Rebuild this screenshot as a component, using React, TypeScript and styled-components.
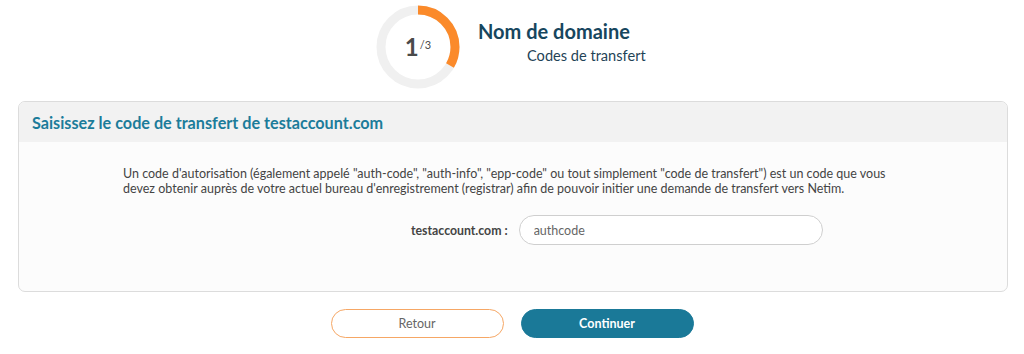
import React from 'react';
import styled, { createGlobalStyle } from 'styled-components';

const GlobalStyle = createGlobalStyle`
  html, body {
    margin: 0;
    padding: 0;
    background: #ffffff;
    font-family: 'Lato', 'Open Sans', sans-serif;
  }
`;

const Page = styled.div`
  width: 1024px;
  height: 354px;
  box-sizing: border-box;
  padding: 0 16px 0 18px;
  display: flex;
  flex-direction: column;
  overflow: hidden;
`;

const StepHeader = styled.div`
  display: flex;
  align-items: flex-start;
  padding-left: 358px;
  padding-top: 5px;
  gap: 18px;
  height: 96px;
  box-sizing: border-box;
`;

const Ring = styled.div`
  position: relative;
  width: 84px;
  height: 84px;
  flex: none;
`;

const RingLabel = styled.div`
  position: absolute;
  inset: 0;
  display: flex;
  align-items: center;
  justify-content: center;
  color: #4a4a4a;
  font-weight: 700;
  font-size: 24px;
  line-height: 1;

  sup {
    font-size: 11px;
    font-weight: 400;
    margin-left: 1px;
    position: relative;
    top: -3px;
  }
`;

const StepTitles = styled.div`
  display: flex;
  flex-direction: column;
  padding-top: 13px;
`;

const StepTitle = styled.div`
  font-size: 20px;
  font-weight: 700;
  color: #17465e;
  line-height: 26px;
`;

const StepSub = styled.div`
  font-size: 14.6px;
  color: #1f4357;
  margin-left: 49px;
  margin-top: 3px;
  line-height: 18px;
`;

const Panel = styled.div`
  border: 1px solid #dcdcdc;
  border-radius: 7px;
  overflow: hidden;
  background: #fcfcfc;
  height: 191px;
  box-sizing: border-box;
  margin-top: 5px;
`;

const PanelHead = styled.div`
  background: #f2f2f2;
  height: 40px;
  display: flex;
  align-items: center;
  padding-left: 13px;
  font-size: 16.2px;
  font-weight: 700;
  color: #1c7c9a;
`;

const PanelBody = styled.div`
  display: flex;
  flex-direction: column;
  align-items: flex-start;
  padding-top: 24px;
  padding-left: 104px;
`;

const Intro = styled.p`
  margin: 0;
  width: 790px;
  font-size: 12.5px;
  line-height: 15px;
  color: #444;
`;

const FieldRow = styled.div`
  display: flex;
  align-items: center;
  gap: 11px;
  margin-top: 19px;
  margin-left: 288px;
`;

const Label = styled.label`
  font-size: 12.3px;
  font-weight: 700;
  color: #444;
`;

const Input = styled.input`
  width: 304px;
  height: 30px;
  box-sizing: border-box;
  border: 1px solid #cfcfcf;
  border-radius: 15px;
  background: #fff;
  padding: 0 14px;
  font-family: inherit;
  font-size: 12.5px;
  color: #555;
  outline: none;

  &::placeholder {
    color: #666;
  }
`;

const Actions = styled.div`
  display: flex;
  justify-content: center;
  gap: 17px;
  margin-top: 17px;
  padding-right: 2px;
`;

const Button = styled.button<{ $primary?: boolean }>`
  width: 173px;
  height: 29px;
  border-radius: 15px;
  font-family: inherit;
  font-size: 12.5px;
  cursor: pointer;
  border: 1px solid ${p => (p.$primary ? '#1a7998' : '#f6a765')};
  background: ${p => (p.$primary ? '#1a7998' : '#ffffff')};
  color: ${p => (p.$primary ? '#ffffff' : '#666')};
  font-weight: ${p => (p.$primary ? 700 : 400)};
`;

const ProgressRing = ({ step, total }: { step: number; total: number }) => {
  const r = 37;
  const c = 2 * Math.PI * r;
  const frac = step / total;
  return (
    <Ring>
      <svg width="84" height="84" viewBox="0 0 84 84">
        <circle cx="42" cy="42" r={r} fill="none" stroke="#f0f0f0" strokeWidth="9" />
        <circle
          cx="42"
          cy="42"
          r={r}
          fill="none"
          stroke="#fb8a2a"
          strokeWidth="9"
          strokeDasharray={`${c * frac} ${c}`}
          transform="rotate(-90 42 42)"
        />
      </svg>
      <RingLabel>
        {step}
        <sup>/{total}</sup>
      </RingLabel>
    </Ring>
  );
};

export default function App() {
  return (
    <>
      <GlobalStyle />
      <Page>
        <StepHeader>
          <ProgressRing step={1} total={3} />
          <StepTitles>
            <StepTitle>Nom de domaine</StepTitle>
            <StepSub>Codes de transfert</StepSub>
          </StepTitles>
        </StepHeader>
        <Panel>
          <PanelHead>Saisissez le code de transfert de testaccount.com</PanelHead>
          <PanelBody>
            <Intro>
              Un code d'autorisation (également appelé "auth-code", "auth-info", "epp-code" ou tout simplement "code de
              transfert") est un code que vous devez obtenir auprès de votre actuel bureau d'enregistrement (registrar)
              afin de pouvoir initier une demande de transfert vers Netim.
            </Intro>
            <FieldRow>
              <Label htmlFor="authcode">testaccount.com :</Label>
              <Input id="authcode" placeholder="authcode" />
            </FieldRow>
          </PanelBody>
        </Panel>
        <Actions>
          <Button>Retour</Button>
          <Button $primary>Continuer</Button>
        </Actions>
      </Page>
    </>
  );
}
